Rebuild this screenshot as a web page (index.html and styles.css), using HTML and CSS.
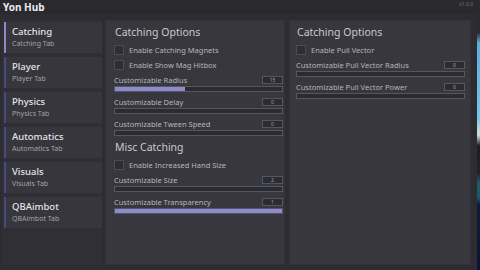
FILE: index.html
```html
<!DOCTYPE html>
<html lang="en">
<head>
    <meta charset="UTF-8">
    <title>Yon Hub</title>
    <link rel="stylesheet" href="styles.css">
</head>
<body>
    <div class="screen">
        <div class="window">
            <div class="titlebar">
                <span class="app-name">Yon Hub</span>
                <span class="version">v1.0.0</span>
            </div>

            <div class="main">
                <div class="sidebar">
                    <div class="tab active">
                        <div class="tab-title">Catching</div>
                        <div class="tab-sub">Catching Tab</div>
                    </div>
                    <div class="tab">
                        <div class="tab-title">Player</div>
                        <div class="tab-sub">Player Tab</div>
                    </div>
                    <div class="tab">
                        <div class="tab-title">Physics</div>
                        <div class="tab-sub">Physics Tab</div>
                    </div>
                    <div class="tab">
                        <div class="tab-title">Automatics</div>
                        <div class="tab-sub">Automatics Tab</div>
                    </div>
                    <div class="tab">
                        <div class="tab-title">Visuals</div>
                        <div class="tab-sub">Visuals Tab</div>
                    </div>
                    <div class="tab">
                        <div class="tab-title">QBAimbot</div>
                        <div class="tab-sub">QBAimbot Tab</div>
                    </div>
                </div>

                <div class="panel panel-mid">
                    <div class="section-title">Catching Options</div>
                    <div class="toggle"><span class="box"></span>Enable Catching Magnets</div>
                    <div class="toggle"><span class="box"></span>Enable Show Mag Hitbox</div>

                    <div class="slider">
                        <div class="slider-head"><span>Customizable Radius</span><span class="value">15</span></div>
                        <div class="bar"><div class="fill" style="width: 42%"></div></div>
                    </div>
                    <div class="slider">
                        <div class="slider-head"><span>Customizable Delay</span><span class="value">0</span></div>
                        <div class="bar"></div>
                    </div>
                    <div class="slider">
                        <div class="slider-head"><span>Customizable Tween Speed</span><span class="value">0</span></div>
                        <div class="bar"></div>
                    </div>

                    <div class="section-title second">Misc Catching</div>
                    <div class="toggle"><span class="box"></span>Enable Increased Hand Size</div>

                    <div class="slider">
                        <div class="slider-head"><span>Customizable Size</span><span class="value">2</span></div>
                        <div class="bar"></div>
                    </div>
                    <div class="slider">
                        <div class="slider-head"><span>Customizable Transparency</span><span class="value">1</span></div>
                        <div class="bar"><div class="fill" style="width: 100%"></div></div>
                    </div>
                </div>

                <div class="panel panel-right">
                    <div class="section-title">Catching Options</div>
                    <div class="toggle"><span class="box"></span>Enable Pull Vector</div>

                    <div class="slider">
                        <div class="slider-head"><span>Customizable Pull Vector Radius</span><span class="value">0</span></div>
                        <div class="bar"></div>
                    </div>
                    <div class="slider">
                        <div class="slider-head"><span>Customizable Pull Vector Power</span><span class="value">0</span></div>
                        <div class="bar"></div>
                    </div>
                </div>
            </div>
        </div>
        <div class="desktop"></div>
    </div>
</body>
</html>
```

FILE: styles.css
```css
* {
    margin: 0;
    padding: 0;
    box-sizing: border-box;
}

body {
    font-family: 'Noto Sans', 'Open Sans', sans-serif;
    background: #2c2c31;
    width: 480px;
    height: 270px;
    overflow: hidden;
}

.screen {
    display: flex;
    height: 270px;
}

.window {
    width: 477px;
    height: 270px;
    background: #2c2c31;
    display: flex;
    flex-direction: column;
}

.desktop {
    flex: 1;
    background: linear-gradient(180deg, #2a2a30 0%, #2a2a30 12%, #5aaee0 16%, #7cc4ec 44%, #d8dde2 50%, #1c1e24 54%, #202228 64%, #1f5a70 68%, #1a5870 73%, #0e1a3c 76%, #0c1436 100%);
}

.titlebar {
    height: 14px;
    background: #29292e;
    display: flex;
    align-items: center;
    justify-content: space-between;
    padding: 0 4px 0 3px;
}

.app-name {
    color: #ececf0;
    font-size: 10px;
    font-weight: 700;
    line-height: 14px;
}

.version {
    color: #77777e;
    font-size: 5px;
    align-self: flex-start;
    margin-top: 1px;
}

.main {
    flex: 1;
    display: flex;
    padding: 6px 6px 5px 2px;
}

.sidebar {
    width: 100px;
    background: #2f2f35;
    padding: 2px 0 0 2px;
    display: flex;
    flex-direction: column;
    gap: 4px;
}

.tab {
    height: 31px;
    background: #36363c;
    border-left: 2px solid #4b4a7c;
    padding: 4px 0 0 6px;
}

.tab.active {
    border-left-color: #8b88cc;
}

.tab-title {
    color: #e4e4e8;
    font-size: 9.5px;
    font-weight: 500;
    line-height: 12px;
}

.tab-sub {
    color: #a2a2a9;
    font-size: 7px;
    line-height: 11px;
}

.panel {
    background: #37373d;
    display: flex;
    flex-direction: column;
}

.panel-mid {
    width: 180px;
    margin-left: 3px;
    padding: 5px 2px 0 9px;
    box-shadow: inset 0 0 0 1px #323238;
}

.panel-right {
    flex: 1;
    margin-left: 4px;
    padding: 5px 6px 0 7px;
    box-shadow: inset 0 0 0 1px #323238;
}

.section-title {
    color: #c9c9cf;
    font-size: 10.5px;
    line-height: 14px;
    padding-left: 1px;
}

.section-title.second {
    margin-top: 4px;
}

.toggle {
    display: flex;
    align-items: center;
    height: 10px;
    margin-top: 5px;
    color: #b6b6bc;
    font-size: 7.5px;
}

.section-title + .toggle {
    margin-top: 6px;
}

.box {
    width: 10px;
    height: 10px;
    background: #2d2d3a;
    border: 1px solid #4c4c55;
    margin-right: 5px;
}

.slider {
    margin-top: 5px;
}

.slider-head {
    display: flex;
    justify-content: space-between;
    align-items: center;
    height: 9px;
    color: #b6b6bc;
    font-size: 7.5px;
}

.value {
    width: 21px;
    height: 8px;
    background: #2b2b35;
    border: 1px solid #56565e;
    color: #a0a0a8;
    font-size: 5px;
    line-height: 6px;
    text-align: center;
}

.bar {
    height: 6px;
    margin-top: 2px;
    background: #2b2b33;
    border: 1px solid #56565e;
    overflow: hidden;
}

.fill {
    height: 100%;
    background: #8d8ace;
}
```
